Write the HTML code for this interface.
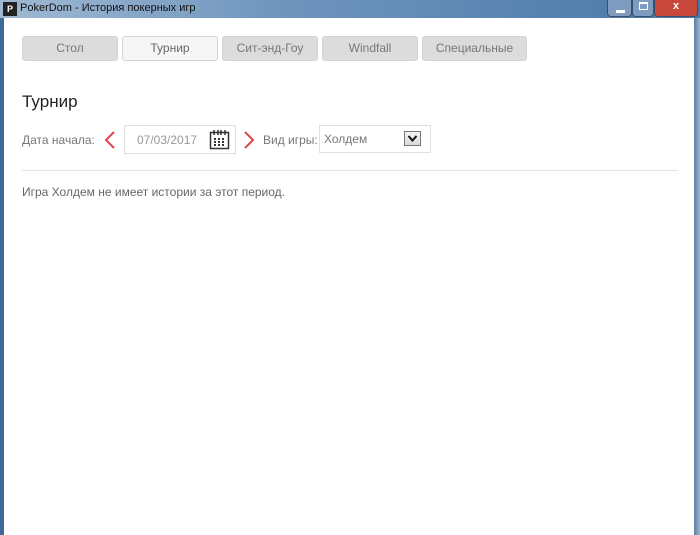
<!DOCTYPE html>
<html><head><meta charset="utf-8"><style>
*{margin:0;padding:0;box-sizing:border-box}
body{width:700px;height:535px;overflow:hidden;background:#3f6b9a;font-family:"Liberation Sans","Noto Sans CJK SC",sans-serif;position:relative}
.tb{position:absolute;left:0;top:0;width:700px;height:18px;background:linear-gradient(90deg,#9fb9d3 0%,#6f95bd 40%,#4a77a8 100%)}
.tt{position:absolute;left:20px;top:2px;font-size:11px;color:#111}
.ic{position:absolute;left:3px;top:2px;width:14px;height:14px;background:#222;color:#fff;font-size:9px;font-weight:bold;line-height:14px;text-align:center}
.cb{position:absolute;top:0;height:17px;border:1px solid #3a4f69;border-top:none;border-radius:0 0 4px 4px}
.main{position:absolute;left:4px;top:18px;width:690px;height:517px;background:#fff}
.right{position:absolute;right:0;top:18px;width:6px;height:517px;background:linear-gradient(90deg,#5c7fa5,#9cb6cf)}
.tab{position:absolute;top:36px;height:25px;border:1px solid #d4d4d4;border-radius:3px;background:#dcdcdc;color:#777;font-size:12px;text-align:center;line-height:23px}
.tab.a{background:#f6f6f6;color:#666}
</style></head><body>
<div class="tb"><div class="ic">P</div><div class="tt">PokerDom - История покерных игр</div>
<div class="cb" style="left:607px;width:25px;background:#7d9cbf"><div style="position:absolute;left:8px;top:10px;width:9px;height:3px;background:#fff"></div></div>
<div class="cb" style="left:632px;width:22px;background:#7d9cbf"><div style="position:absolute;left:6px;top:2px;width:9px;height:8px;border:1px solid #fff;border-top-width:2px"></div></div>
<div class="cb" style="left:654px;width:44px;background:#c8483c;color:#fff;font-size:11px;font-weight:bold;text-align:center">x</div>
</div>
<div class="main"></div>
<div class="right"></div>
<div class="tab" style="left:22px;width:96px">Стол</div>
<div class="tab a" style="left:122px;width:96px">Турнир</div>
<div class="tab" style="left:222px;width:96px">Сит-энд-Гоу</div>
<div class="tab" style="left:322px;width:96px">Windfall</div>
<div class="tab" style="left:422px;width:105px">Специальные</div>
<div style="position:absolute;left:22px;top:92px;font-size:17px;color:#222">Турнир</div>
<div style="position:absolute;left:22px;top:133px;font-size:12px;color:#777">Дата начала:</div>
<svg style="position:absolute;left:103px;top:130px" width="14" height="20"><path d="M11 2L3 10L11 18" fill="none" stroke="#e0454a" stroke-width="2"/></svg>
<div style="position:absolute;left:124px;top:125px;width:112px;height:29px;border:1px solid #e0e0e0;background:#fff"></div>
<div style="position:absolute;left:137px;top:133px;font-size:12px;color:#999">07/03/2017</div>
<svg style="position:absolute;left:209px;top:129px" width="22" height="22"><rect x="1.5" y="3.5" width="18" height="16" fill="none" stroke="#333" stroke-width="1.5"/><path d="M5 1v5M9 1v5M12 1v5M16 1v5" stroke="#333" stroke-width="1.5"/><g fill="#333"><rect x="5" y="9" width="2" height="2"/><rect x="9" y="9" width="2" height="2"/><rect x="13" y="9" width="2" height="2"/><rect x="5" y="12" width="2" height="2"/><rect x="9" y="12" width="2" height="2"/><rect x="13" y="12" width="2" height="2"/><rect x="5" y="15" width="2" height="2"/><rect x="9" y="15" width="2" height="2"/><rect x="13" y="15" width="2" height="2"/></g></svg>
<svg style="position:absolute;left:242px;top:130px" width="14" height="20"><path d="M3 2L11 10L3 18" fill="none" stroke="#e0454a" stroke-width="2"/></svg>
<div style="position:absolute;left:263px;top:133px;font-size:12px;color:#777">Вид игры:</div>
<div style="position:absolute;left:319px;top:125px;width:112px;height:28px;border:1px solid #e0e0e0;background:#fff"></div>
<div style="position:absolute;left:324px;top:132px;font-size:12px;color:#777">Холдем</div>
<div style="position:absolute;left:404px;top:131px;width:17px;height:15px;border:1px solid #777;background:linear-gradient(#f4f4f4,#d8d8d8)"><svg width="15" height="13" style="position:absolute;left:0;top:0"><path d="M3.5 4L7.5 8.5L11.5 4" fill="none" stroke="#111" stroke-width="2"/></svg></div>
<div style="position:absolute;left:22px;top:170px;width:656px;height:1px;background:#e2e2e2"></div>
<div style="position:absolute;left:22px;top:185px;font-size:12px;color:#666">Игра Холдем не имеет истории за этот период.</div>
</body></html>
